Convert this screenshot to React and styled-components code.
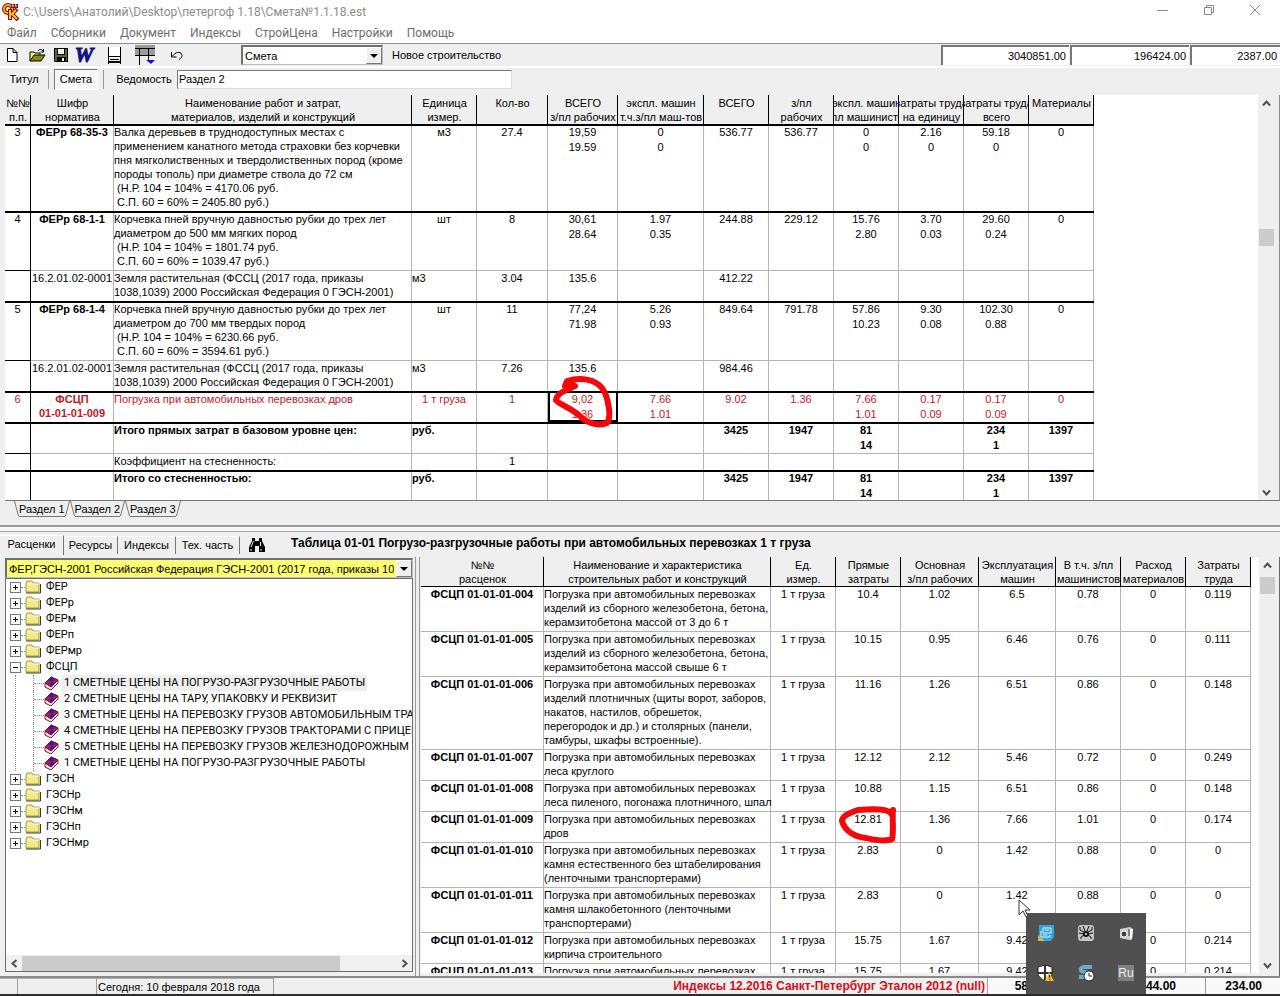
import React, { useState } from "react";
import styled, { createGlobalStyle } from "styled-components";

const estimateColumns = [
    { width: 26, lines: ["№№", "п.п."] },
    { width: 83, lines: ["Шифр", "норматива"] },
    { width: 298, lines: ["Наименование работ и затрат,", "материалов, изделий и конструкций"] },
    { width: 65, lines: ["Единица", "измер."] },
    { width: 71, lines: ["Кол-во"] },
    { width: 70, lines: ["ВСЕГО", "з/пл рабочих"] },
    { width: 86, lines: ["экспл. машин", "т.ч.з/пл маш-тов"] },
    { width: 65, lines: ["ВСЕГО"] },
    { width: 65, lines: ["з/пл", "рабочих"] },
    { width: 65, lines: ["экспл. машин", "з/пл машинистов"] },
    { width: 65, lines: ["затраты труда", "на единицу"] },
    { width: 65, lines: ["затраты труда", "всего"] },
    { width: 65, lines: ["Материалы"] },
];

const soil = "Земля растительная (ФССЦ (2017 года, приказы\n1038,1039) 2000 Российская Федерация 0 ГЭСН-2001)";

const estimateRows = [
    {
        thick: true,
        cells: ["3", "ФЕРр 68-35-3", "Валка деревьев в труднодоступных местах с\nприменением канатного метода страховки без корчевки\nпня мягколиственных и твердолиственных пород (кроме\nпороды тополь) при диаметре ствола до 72 см\n (Н.Р. 104 = 104% = 4170.06 руб.\n С.П. 60 = 60% = 2405.80 руб.)", "м3", "27.4", "19,59\n19.59", "0\n0", "536.77", "536.77", "0\n0", "2.16\n0", "59.18\n0", "0"],
    },
    {
        thick: true,
        cells: ["4", "ФЕРр 68-1-1", "Корчевка пней вручную давностью рубки до трех лет\nдиаметром до 500 мм мягких пород\n (Н.Р. 104 = 104% = 1801.74 руб.\n С.П. 60 = 60% = 1039.47 руб.)", "шт", "8", "30,61\n28.64", "1.97\n0.35", "244.88", "229.12", "15.76\n2.80", "3.70\n0.03", "29.60\n0.24", "0"],
    },
    { resource: true, cells: ["", "16.2.01.02-0001", soil, "м3", "3.04", "135.6", "", "412.22", "", "", "", "", ""] },
    {
        thick: true,
        cells: ["5", "ФЕРр 68-1-4", "Корчевка пней вручную давностью рубки до трех лет\nдиаметром до 700 мм твердых пород\n (Н.Р. 104 = 104% = 6230.66 руб.\n С.П. 60 = 60% = 3594.61 руб.)", "шт", "11", "77,24\n71.98", "5.26\n0.93", "849.64", "791.78", "57.86\n10.23", "9.30\n0.08", "102.30\n0.88", "0"],
    },
    { resource: true, cells: ["", "16.2.01.02-0001", soil, "м3", "7.26", "135.6", "", "984.46", "", "", "", "", ""] },
    {
        thick: true,
        current: true,
        cells: ["6", "ФСЦП\n01-01-01-009", "Погрузка при автомобильных перевозках дров", "1 т груза", "1", "9,02\n1.36", "7.66\n1.01", "9.02", "1.36", "7.66\n1.01", "0.17\n0.09", "0.17\n0.09", "0"],
    },
    { thick: true, total: true, cells: ["", "", "Итого прямых затрат в базовом уровне цен:", "руб.", "", "", "", "3425", "1947", "81\n14", "", "234\n1", "1397"] },
    { resource: true, cells: ["", "", "Коэффициент на стесненность:", "", "1", "", "", "", "", "", "", "", ""] },
    { thick: true, total: true, cells: ["", "", "Итого со стесненностью:", "руб.", "", "", "", "3425", "1947", "81\n14", "", "234\n1", "1397"] },
];

const priceColumns = [
    { width: 123, lines: ["№№", "расценок"] },
    { width: 227, lines: ["Наименование и характеристика", "строительных работ и конструкций"] },
    { width: 65, lines: ["Ед.", "измер."] },
    { width: 65, lines: ["Прямые", "затраты"] },
    { width: 78, lines: ["Основная", "з/пл рабочих"] },
    { width: 77, lines: ["Эксплуатация", "машин"] },
    { width: 65, lines: ["В т.ч. з/пл", "машинистов"] },
    { width: 65, lines: ["Расход", "материалов"] },
    { width: 65, lines: ["Затраты", "труда"] },
];

const load = "Погрузка при автомобильных перевозках";

const priceRows = [
    ["004", load + "\nизделий из сборного железобетона, бетона,\nкерамзитобетона массой от 3 до 6 т", "10.4", "1.02", "6.5", "0.78", "0", "0.119"],
    ["005", load + "\nизделий из сборного железобетона, бетона,\nкерамзитобетона массой свыше 6 т", "10.15", "0.95", "6.46", "0.76", "0", "0.111"],
    ["006", load + "\nизделий плотничных (щиты ворот, заборов,\nнакатов, настилов, обрешеток,\nперегородок и др.) и столярных (панели,\nтамбуры, шкафы встроенные).", "11.16", "1.26", "6.51", "0.86", "0", "0.148"],
    ["007", load + "\nлеса круглого", "12.12", "2.12", "5.46", "0.72", "0", "0.249"],
    ["008", load + "\nлеса пиленого, погонажа плотничного, шпал", "10.88", "1.15", "6.51", "0.86", "0", "0.148"],
    ["009", load + "\nдров", "12.81", "1.36", "7.66", "1.01", "0", "0.174"],
    ["010", load + "\nкамня естественного без штабелирования\n(ленточными транспортерами)", "2.83", "0", "1.42", "0.88", "0", "0"],
    ["011", load + "\nкамня шлакобетонного (ленточными\nтранспортерами)", "2.83", "0", "1.42", "0.88", "0", "0"],
    ["012", load + "\nкирпича строительного", "15.75", "1.67", "9.42", "1.16", "0", "0.214"],
    ["013", load, "15.75", "1.67", "9.42", "1.16", "0", "0.214"],
];

const tree = [
    { name: "ФЕР" },
    { name: "ФЕРр" },
    { name: "ФЕРм" },
    { name: "ФЕРп" },
    { name: "ФЕРмр" },
    {
        name: "ФСЦП",
        children: [
            "1 СМЕТНЫЕ ЦЕНЫ НА ПОГРУЗО-РАЗГРУЗОЧНЫЕ РАБОТЫ",
            "2 СМЕТНЫЕ ЦЕНЫ НА ТАРУ, УПАКОВКУ И РЕКВИЗИТ",
            "3 СМЕТНЫЕ ЦЕНЫ НА ПЕРЕВОЗКУ ГРУЗОВ АВТОМОБИЛЬНЫМ ТРАНСПОРТОМ",
            "4 СМЕТНЫЕ ЦЕНЫ НА ПЕРЕВОЗКУ ГРУЗОВ ТРАКТОРАМИ С ПРИЦЕПАМИ",
            "5 СМЕТНЫЕ ЦЕНЫ НА ПЕРЕВОЗКУ ГРУЗОВ ЖЕЛЕЗНОДОРОЖНЫМ ТРАНСПОРТОМ",
            "1 СМЕТНЫЕ ЦЕНЫ НА ПОГРУЗО-РАЗГРУЗОЧНЫЕ РАБОТЫ",
        ],
    },
    { name: "ГЭСН" },
    { name: "ГЭСНр" },
    { name: "ГЭСНм" },
    { name: "ГЭСНп" },
    { name: "ГЭСНмр" },
];

const AppLogo = () => (
    <svg width="18" height="18" viewBox="0 0 18 18">
        <circle cx="6" cy="6" r="4" fill="none" stroke="#8a1010" strokeWidth="4" />
        <circle cx="6" cy="6" r="4" fill="none" stroke="#f5a61c" strokeWidth="2" />
        <path d="M9 1h7v4H9z" fill="#6d1a1a" />
        <path d="M10 2h1v2M13 2h1v2" stroke="#fff" strokeWidth="1" fill="none" />
        <path d="M8 6v11M15 6l-5 5 6 6" stroke="#8a1010" strokeWidth="4" fill="none" />
        <path d="M8 7v9M14 7l-4 4 5 5" stroke="#ffc02e" strokeWidth="2" fill="none" />
    </svg>
);

const NewIcon = () => (
    <svg width="12" height="14" viewBox="0 0 12 14">
        <path d="M1.500 .5h5.500l4 4v9H1.500z M7 .5v4h4" fill="#fff" stroke="#000" />
    </svg>
);

const OpenIcon = () => (
    <svg width="17" height="14" viewBox="0 0 17 14">
        <path d="M1 13V4h4l1 1h5v3" fill="#f4f08a" stroke="#000" />
        <path d="M1 13l4-6h11l-4 6z" fill="#8a8a1c" stroke="#000" />
        <path d="M9 3c1-2 4-2 5 0M14.500 1v3h-3" fill="none" stroke="#000" />
    </svg>
);

const SaveIcon = () => (
    <svg width="14" height="14" viewBox="0 0 14 14">
        <path d="M0 0h14v14H1l-1-1z" fill="#000" />
        <path d="M1 1h2v6h8V1h2v12h-1V9H3v4H1z" fill="#5d6b25" />
        <path d="M4 1h6v5H4z" fill="#f2f2f2" />
        <path d="M8 10h2v3H8z" fill="#fff" />
    </svg>
);

const LevelIcon = () => (
    <svg width="15" height="17" viewBox="0 0 15 17">
        <path d="M2 0h11v11H2z" fill="#fff" />
        <path d="M1.500 0v17M13.500 0v17" stroke="#000" />
        <path d="M1 9.500h13" stroke="#000" />
        <path d="M3 12.500h9" stroke="#000" />
        <path d="M1 15h13" stroke="#000" strokeWidth="2" />
    </svg>
);

const TableIcon = () => (
    <svg width="20" height="20" viewBox="0 0 20 20">
        <path d="M0 0h20v10H0z" fill="#9b9b9b" />
        <path d="M0 3.500h20M0 10.500h20M4.500 3v17M13.500 3v12" stroke="#000" />
        <path d="M11 15h9l-4 4z" fill="#1717c9" />
    </svg>
);

const UndoIcon = () => (
    <svg width="13" height="10" viewBox="0 0 13 10">
        <path d="M1.500 2v5h5M2 6.500l2-2c2-3 8-3 8 1 0 2-1 3-3 4" fill="none" stroke="#000" strokeWidth="1" />
    </svg>
);

const BinocularsIcon = () => (
    <svg width="16" height="14" viewBox="0 0 16 14">
        <path d="M3 0h3v3h4V0h3v3l3 6v5h-6V8H6v6H0V9l3-6z" fill="#000" />
        <path d="M4.500 3L2 9M11.500 4v4M2 11v2M12 11v2" stroke="#eee" />
    </svg>
);

const FolderIcon = () => (
    <svg width="16" height="14" viewBox="0 0 16 14">
        <path d="M1 3l1-2h5l1 2h6v9H1z" fill="#f0ea8e" stroke="#a39a3a" />
        <path d="M2 4h12" stroke="#fffbd0" />
        <path d="M1 13h14.500V4" fill="none" stroke="#3c3a12" />
    </svg>
);

const BookIcon = () => (
    <svg width="15" height="14" viewBox="0 0 15 14">
        <path d="M1 7l6-6 7 3v3l-7 7-6-3z" fill="#f4f0f4" stroke="#7a1428" />
        <path d="M1 7l6-6 7 3-7 7z" fill="#cf1228" stroke="#7a1428" />
        <path d="M4 4l3-3 4 2-3 3z" fill="#2020c8" />
        <path d="M5 8l3-2 3 1-4 3z" fill="#2020c8" />
        <path d="M2 9l5 3 6-6" fill="none" stroke="#c9c9dc" />
    </svg>
);

const Chevron = ({ turn }) => (
    <svg width="9" height="9" viewBox="0 0 9 9" style={{ transform: `rotate(${turn}deg)` }}>
        <path d="M1 6.500l3.500-4 3.500 4" fill="none" stroke="#505050" strokeWidth="2" />
    </svg>
);

const Grid = ({ columns, label, children }) => (
    <Sheet aria-label={label}>
        <colgroup>
            {columns.map((column, i) => <Column key={i} $width={column.width} />)}
        </colgroup>
        <thead>
            <tr>
                {columns.map((column, i) => (
                    <HeadCell key={i}>
                        <HeadText>
                            {column.lines.map((line) => <span key={line}>{line}</span>)}
                        </HeadText>
                    </HeadCell>
                ))}
            </tr>
        </thead>
        <tbody>{children}</tbody>
    </Sheet>
);

const VerticalScroll = ({ before, after }) => (
    <ScrollBar>
        <ScrollButton aria-label="Вверх"><Chevron turn={0} /></ScrollButton>
        <Space $grow={before} />
        <Thumb />
        <Space $grow={after} />
        <ScrollButton aria-label="Вниз"><Chevron turn={180} /></ScrollButton>
    </ScrollBar>
);

const App = () => {
    const [document, setDocument] = useState("Смета");
    const [section, setSection] = useState("Раздел 2");
    const [opened, setOpened] = useState(["ФСЦП"]);

    const toggle = (name) => {
        setOpened(opened.includes(name) ? opened.filter((item) => item !== name) : [...opened, name]);
    };

    return (
        <Window>
            <GlobalStyle />
            <Upper>
                <TitleBar>
                    <AppLogo />
                    <Title>C:\Users\Анатолий\Desktop\петергоф 1.18\Смета№1.1.18.est</Title>
                    <WindowButton aria-label="Свернуть">
                        <svg width="12" height="12"><path d="M0 6.500h11" stroke="#888" /></svg>
                    </WindowButton>
                    <WindowButton aria-label="Восстановить">
                        <svg width="12" height="12"><path d="M1.500 3.500h7v7h-7zM3.500 3V1.500h7v7H9" fill="none" stroke="#888" /></svg>
                    </WindowButton>
                    <WindowButton aria-label="Закрыть">
                        <svg width="12" height="12"><path d="M1 1l10 10M11 1L1 11" stroke="#888" /></svg>
                    </WindowButton>
                </TitleBar>

                <Menu>
                    {["Файл", "Сборники", "Документ", "Индексы", "СтройЦена", "Настройки", "Помощь"].map((item) => (
                        <MenuItem key={item}>{item}</MenuItem>
                    ))}
                </Menu>

                <ToolBar>
                    <Tools>
                        <ToolButton $width={24} aria-label="Создать"><NewIcon /></ToolButton>
                        <ToolButton $width={26} aria-label="Открыть"><OpenIcon /></ToolButton>
                        <ToolButton $width={22} aria-label="Сохранить"><SaveIcon /></ToolButton>
                        <WordButton $width={24}>W</WordButton>
                        <ToolButton $width={36} aria-label="Уровень"><LevelIcon /></ToolButton>
                        <ToolButton $width={26} aria-label="Таблица"><TableIcon /></ToolButton>
                        <ToolButton $width={36} aria-label="Отменить"><UndoIcon /></ToolButton>
                    </Tools>
                    <Combo $width={142}>
                        <ComboSelect aria-label="Документ" value={document} onChange={(e) => setDocument(e.target.value)}>
                            <option>Смета</option>
                            <option>Ведомость</option>
                        </ComboSelect>
                        <ComboArrow />
                    </Combo>
                    <BuildKind>Новое строительство</BuildKind>
                    <TotalInput $width={128} aria-label="Всего" readOnly value="3040851.00" />
                    <TotalInput $width={119} aria-label="Зарплата" readOnly value="196424.00" />
                    <TotalInput $width={90} aria-label="Трудозатраты" readOnly value="2387.00" />
                </ToolBar>

                <ViewBar>
                    <ViewButton $width={48}>Титул</ViewButton>
                    <Divider />
                    <ViewButton $width={44} $pressed>Смета</ViewButton>
                    <Divider />
                    <ViewButton $width={70}>Ведомость</ViewButton>
                    <SectionInput aria-label="Раздел" value={section} onChange={(e) => setSection(e.target.value)} />
                </ViewBar>

                <SheetArea>
                    <SheetView>
                        <Grid columns={estimateColumns} label="Смета">
                            {estimateRows.map((row, i) => (
                                <Row key={i} $current={row.current} $total={row.total}>
                                    {row.cells.map((cell, j) => (
                                        <Cell
                                            key={j}
                                            $thick={row.thick}
                                            $black={j === 0}
                                            $number={j > 4}
                                            $left={j === 2 || (j === 3 && (row.resource || row.total))}
                                            $bold={j === 1 && !row.resource}
                                            $selected={row.current && j === 5}
                                        >
                                            {cell}
                                            {row.current && j === 5 && (
                                                <Marker $left={2} $top={-17} width="66" height="54" viewBox="550 375 66 54">
                                                    <path d="M565 387L567 382C580 378 595 380 602 389C608 397 612 418 607 424C600 427 589 425 582 419C574 410 558 405 556 401C557 394 566 391 575 387L568 384" />
                                                </Marker>
                                            )}
                                        </Cell>
                                    ))}
                                </Row>
                            ))}
                        </Grid>
                    </SheetView>
                    <VerticalScroll before={118} after={237} />
                </SheetArea>

                <SectionTabs>
                    {["Раздел 1", "Раздел 2", "Раздел 3"].map((name) => (
                        <SectionTab key={name} $active={name === section} onClick={() => setSection(name)}>{name}</SectionTab>
                    ))}
                </SectionTabs>
            </Upper>

            <Splitter />

            <Lower>
                <BookBar>
                    <BookTab $width={64} $active>Расценки</BookTab>
                    <BookTab $width={54}>Ресурсы</BookTab>
                    <BookTab $width={58}>Индексы</BookTab>
                    <BookTab $width={64}>Тех. часть</BookTab>
                    <FindButton aria-label="Найти"><BinocularsIcon /></FindButton>
                    <TableTitle>Таблица 01-01 Погрузо-разгрузочные работы при автомобильных перевозках 1 т груза</TableTitle>
                </BookBar>

                <Panes>
                    <TreePane>
                        <Combo>
                            <ComboSelect $yellow aria-label="Сборник">
                                <option>ФЕР,ГЭСН-2001 Российская Федерация ГЭСН-2001 (2017 года, приказы 1038,1039)</option>
                            </ComboSelect>
                            <ComboArrow />
                        </Combo>
                        <TreeBox>
                            <TreeList>
                                {tree.map((node) => (
                                    <li key={node.name}>
                                        <TreeRow>
                                            <Toggle aria-label={node.name} onClick={() => toggle(node.name)}>
                                                <svg width="9" height="9">
                                                    <path d="M2 4.500h5" stroke="#000" />
                                                    {!opened.includes(node.name) && <path d="M4.500 2v5" stroke="#000" />}
                                                </svg>
                                            </Toggle>
                                            <Dots $width={4} />
                                            <FolderIcon />
                                            <NodeName>{node.name}</NodeName>
                                        </TreeRow>
                                        {node.children && opened.includes(node.name) && (
                                            <Branch>
                                                {node.children.map((child, i) => (
                                                    <TreeRow as="li" key={i}>
                                                        <Dots $width={10} />
                                                        <BookIcon />
                                                        <NodeName $selected={i === 0}>{child}</NodeName>
                                                    </TreeRow>
                                                ))}
                                            </Branch>
                                        )}
                                    </li>
                                ))}
                            </TreeList>
                            <BottomScroll>
                                <ScrollButton aria-label="Влево"><Chevron turn={-90} /></ScrollButton>
                                <WideThumb />
                                <Space $grow={56} />
                                <ScrollButton aria-label="Вправо"><Chevron turn={90} /></ScrollButton>
                            </BottomScroll>
                        </TreeBox>
                    </TreePane>

                    <PricePane>
                        <SheetView>
                            <Grid columns={priceColumns} label="Расценки">
                                {priceRows.map(([code, name, ...numbers]) => (
                                    <Row key={code}>
                                        <PriceCell $bold>ФСЦП 01-01-01-{code}</PriceCell>
                                        <PriceCell $left>{name}</PriceCell>
                                        <PriceCell>1 т груза</PriceCell>
                                        {numbers.map((number, j) => (
                                            <PriceCell key={j}>
                                                {number}
                                                {code === "009" && j === 0 && (
                                                    <Marker $left={1} $top={-9} width="62" height="44" viewBox="836 801 62 44">
                                                        <path d="M891 814C889 807 870 808 857 809C848 812 841 815 841 820C844 831 855 836 865 837C875 840 887 840 891 838C893 829 891 819 892 809" />
                                                    </Marker>
                                                )}
                                            </PriceCell>
                                        ))}
                                    </Row>
                                ))}
                            </Grid>
                        </SheetView>
                        <VerticalScroll before={4} after={360} />
                    </PricePane>
                </Panes>

                <StatusBar>
                    <StatusCell $width={18} />
                    <StatusCell $width={79} />
                    <StatusCell $width={177}>Сегодня: 10 февраля 2018 года</StatusCell>
                    <IndexInfo>Индексы 12.2016 Санкт-Петербург Эталон 2012 (null)</IndexInfo>
                    <StatusTotal $width={62} $gap={22}>58</StatusTotal>
                    <StatusTotal $width={155} $gap={29}>44.00</StatusTotal>
                    <StatusTotal $width={75} $gap={18}>234.00</StatusTotal>
                </StatusBar>
            </Lower>

            <Tray>
                <svg width="18" height="18" viewBox="0 0 18 18">
                    <path d="M2 1h15v12l-3 4H2z" fill="#36a3dd" />
                    <path d="M1 11v6h7z" fill="#d3b35c" />
                    <path d="M6 4h8v5H6zM4 7v6h9v-2M8 6h4M6 11h4" fill="none" stroke="#d8f2ff" />
                </svg>
                <svg width="18" height="18" viewBox="0 0 18 18">
                    <rect x="1" y="1" width="16" height="16" rx="3" fill="#c4c4c4" />
                    <circle cx="9" cy="10" r="3" fill="#111" />
                    <path d="M3 3v3l4 2M15 3v3l-4 2M2 9l5 1M16 9l-5 1M4 15v-2l3-2M14 15v-2l-3-2M6 2l2 5M12 2l-2 5" stroke="#111" fill="none" />
                    <circle cx="9" cy="10" r="1" fill="#fff" />
                </svg>
                <svg width="18" height="18" viewBox="0 0 18 18">
                    <path d="M3 5l10-2 3 2-1 10-3 1-9-2z" fill="#cfcfcf" />
                    <path d="M13 5l3 0-1 10-2 1z" fill="#fafafa" />
                    <path d="M12 5v7" stroke="#333" />
                    <circle cx="7" cy="10" r="3" fill="#38404a" stroke="#fff" />
                </svg>
                <svg width="18" height="18" viewBox="0 0 18 18">
                    <path d="M8 1l7 2v6c0 4-4 6-7 8-3-2-7-4-7-8V3z" fill="#fff" stroke="#222" />
                    <path d="M8 1v16M1 9h14" stroke="#333" strokeWidth="2" />
                    <path d="M12 8l5 9H8z" fill="#f5b82e" />
                    <path d="M12.500 11v3M12.500 15v1" stroke="#222" />
                </svg>
                <svg width="18" height="18" viewBox="0 0 18 18">
                    <path d="M15 3H7C2 4 3 8 8 8c6 1 4 5-1 5H2" fill="none" stroke="#6ea8cf" strokeWidth="4" />
                    <circle cx="12" cy="12" r="5" fill="#fff" stroke="#222" />
                    <path d="M12 9v3h3" fill="none" stroke="#222" />
                </svg>
                <Language>Ru</Language>
            </Tray>
            <Pointer width="14" height="20" viewBox="0 0 14 20">
                <path d="M1 1v15l4-4 3 6 2-1-3-6h5z" fill="#fff" stroke="#333" />
            </Pointer>
        </Window>
    );
};

const GlobalStyle = createGlobalStyle`
    * {
        box-sizing: border-box;
    }

    body {
        margin: 0;
        background: #efefef;
        color: #000;
        font-family: 'Liberation Sans', Arial, sans-serif;
        font-size: 11px;
        line-height: 14px;
    }

    button, input, select {
        font: inherit;
        color: inherit;
        margin: 0;
        padding: 0;
        border: none;
        background: none;
        border-radius: 0;
        outline: none;
        white-space: nowrap;
    }

    svg {
        display: block;
        flex: none;
    }
`;

const Window = styled.div`
    position: relative;
    display: flex;
    flex-direction: column;
    height: 100vh;
    overflow: hidden;
    background: #efefef;
`;

const Upper = styled.div`
    display: flex;
    flex-direction: column;
    flex: 525 1 0;
    min-height: 0;
`;

const Lower = styled.div`
    display: flex;
    flex-direction: column;
    flex: 464 1 0;
    min-height: 0;
`;

const TitleBar = styled.header`
    display: flex;
    align-items: center;
    height: 23px;
    flex: none;
    padding: 0 2px;
    background: #fff;
`;

const Title = styled.span`
    flex: 1;
    padding-left: 3px;
    font-family: Roboto, sans-serif;
    font-size: 12px;
    color: #8c8c8c;
`;

const WindowButton = styled.button`
    display: flex;
    justify-content: center;
    align-items: center;
    align-self: flex-start;
    width: 46px;
    height: 20px;
`;

const Menu = styled.nav`
    display: flex;
    gap: 14px;
    height: 20px;
    flex: none;
    padding-left: 7px;
    background: #fff;
`;

const MenuItem = styled.button`
    height: 20px;
    font-family: Roboto, sans-serif;
    font-size: 12px;
    color: #6d6d6d;
`;

const ToolBar = styled.div`
    display: flex;
    align-items: center;
    height: 25px;
    flex: none;
    border-top: 1px solid #8e8e8e;
    border-bottom: 2px solid #fff;
`;

const Tools = styled.div`
    display: flex;
    align-items: center;
    width: 241px;
    height: 22px;
`;

const ToolButton = styled.button`
    display: flex;
    justify-content: center;
    align-items: center;
    width: ${(props) => props.$width}px;
    height: 22px;
`;

const WordButton = styled(ToolButton)`
    font-family: 'Liberation Serif', serif;
    font-size: 21px;
    font-weight: bold;
    font-style: italic;
    color: #14147c;
    -webkit-text-stroke: 1px #14147c;
`;

const Combo = styled.div`
    position: relative;
    width: ${(props) => (props.$width ? props.$width + "px" : "auto")};
    height: 20px;
    flex: none;
`;

const ComboSelect = styled.select`
    appearance: none;
    width: 100%;
    height: 20px;
    padding: 0 18px 0 2px;
    border: 1px solid #bdbdbd;
    border-top: 2px solid #707070;
    border-left: 2px solid #707070;
    background: ${(props) => (props.$yellow ? "#ffff74" : "#fff")};
    overflow: hidden;
`;

const ComboArrow = styled.span`
    position: absolute;
    right: 1px;
    top: 2px;
    width: 16px;
    height: 17px;
    border: 1px solid #fff;
    border-right-color: #777;
    border-bottom-color: #777;
    background: #efefef;
    pointer-events: none;

    &::after {
        content: "";
        position: absolute;
        left: 3px;
        top: 6px;
        border: 4px solid transparent;
        border-top-color: #000;
        border-bottom: none;
    }
`;

const BuildKind = styled.span`
    flex: 1;
    padding-left: 9px;
`;

const TotalInput = styled.input`
    width: ${(props) => props.$width}px;
    height: 20px;
    margin-left: 1px;
    padding-right: 3px;
    border-top: 2px solid #767676;
    border-left: 2px solid #767676;
    background: #fff;
    text-align: right;
`;

const ViewBar = styled.div`
    display: flex;
    align-items: center;
    gap: 5px;
    height: 27px;
    flex: none;
    padding-bottom: 5px;
`;

const ViewButton = styled.button`
    width: ${(props) => props.$width}px;
    height: 21px;
    border: 1px solid ${(props) => (props.$pressed ? "#fff" : "transparent")};
    border-top-color: ${(props) => (props.$pressed ? "#777" : "transparent")};
    border-left-color: ${(props) => (props.$pressed ? "#777" : "transparent")};
    background: ${(props) => (props.$pressed ? "#f7f7f7" : "none")};

    &:first-child {
        margin-right: -5px;
    }
`;

const Divider = styled.span`
    width: 1px;
    height: 19px;
    background: #999;
`;

const SectionInput = styled.input`
    width: 335px;
    height: 19px;
    margin-left: -7px;
    padding: 0 1px;
    border: 1px solid #dcdcdc;
    border-top: 1px solid #777;
    border-left: 1px solid #777;
    background: #fff;
`;

const SheetArea = styled.div`
    display: flex;
    flex: 1;
    min-height: 0;
    margin-left: 5px;
    padding-right: 5px;
    border-right: 1px solid #8a8a8a;
`;

const SheetView = styled.div`
    flex: 1;
    min-width: 0;
    overflow: hidden;
    background: #fff;
`;

const Sheet = styled.table`
    table-layout: fixed;
    width: 1px;
    border-collapse: separate;
    border-spacing: 0;
`;

const Column = styled.col`
    width: ${(props) => props.$width}px;
`;

const HeadCell = styled.th`
    height: 29px;
    padding: 1px 0 0;
    overflow: hidden;
    vertical-align: top;
    font-weight: normal;
    background: #efefef;
    box-shadow: inset -1px 0 0 #000;
`;

const HeadText = styled.div`
    display: flex;
    flex-direction: column;
    align-items: center;
    height: 28px;
    white-space: nowrap;
`;

const Row = styled.tr`
    color: ${(props) => (props.$current ? "#c4161c" : "#000")};
    font-weight: ${(props) => (props.$total ? "bold" : "normal")};
`;

// Lines are inset shadows so that they take no room from the text
const Cell = styled.td`
    position: relative;
    padding: 1px ${(props) => (props.$left ? 0 : 1)}px ${(props) => (props.$number ? 0 : 2)}px 0;
    line-height: ${(props) => (props.$number ? 15 : 14)}px;
    vertical-align: top;
    white-space: pre;
    text-align: ${(props) => (props.$left ? "left" : "center")};
    font-weight: ${(props) => (props.$bold ? "bold" : "inherit")};
    box-shadow:
        ${(props) => (props.$selected ? "inset 0 0 0 2px #000," : "")}
        inset 0 ${(props) => (props.$thick ? "2px" : "1px")} 0 ${(props) => (props.$thick || props.$black ? "#000" : "#b4b4b4")},
        inset -1px 0 0 ${(props) => (props.$black ? "#000" : "#b4b4b4")};
`;

const PriceCell = styled(Cell)`
    tr:first-child > & {
        box-shadow: inset 0 1px 0 #000, inset -1px 0 0 #b4b4b4;
    }
`;

const Marker = styled.svg`
    position: absolute;
    z-index: 1;
    left: ${(props) => props.$left}px;
    top: ${(props) => props.$top}px;
    fill: none;
    stroke: #f5070c;
    stroke-width: 6;
    stroke-linecap: round;
    stroke-linejoin: round;
    pointer-events: none;
`;

const ScrollBar = styled.div`
    display: flex;
    flex-direction: column;
    align-items: center;
    width: 16px;
    flex: none;
    background: #efefef;
`;

const ScrollButton = styled.button`
    display: flex;
    justify-content: center;
    align-items: center;
    width: 16px;
    height: 16px;
    flex: none;
`;

const Space = styled.span`
    flex: ${(props) => props.$grow} 1 0;
`;

const Thumb = styled.span`
    width: 15px;
    height: 17px;
    background: #cbcbcb;
`;

const WideThumb = styled.span`
    flex: 317 1 0;
    height: 15px;
    background: #cbcbcb;
`;

const SectionTabs = styled.div`
    display: flex;
    gap: 10px;
    height: 25px;
    flex: none;
    margin-left: 5px;
    padding-left: 14px;
    border-top: 1px solid #777;
`;

const SectionTab = styled.button`
    position: relative;
    height: 16px;
    border-bottom: 1px solid #777;

    &::before, &::after {
        content: "";
        position: absolute;
        top: 0;
        height: 15px;
        width: 1px;
        background: #777;
    }

    &::before {
        left: -3px;
        transform: skewX(15deg);
    }

    &::after {
        right: -3px;
        transform: skewX(-15deg);
    }
`;

const Splitter = styled.div`
    height: 7px;
    flex: none;
    border-top: 2px solid #9a9a9a;
    border-bottom: 1px solid #a8a8a8;
    background: #f7f7f7;
`;

const BookBar = styled.div`
    display: flex;
    align-items: center;
    height: 25px;
    flex: none;
`;

const BookTab = styled.button`
    width: ${(props) => props.$width}px;
    height: ${(props) => (props.$active ? 20 : 18)}px;
    padding-bottom: ${(props) => (props.$active ? 2 : 0)}px;
    border-right: 1px solid #777;
    border-top: 1px solid #fff;
`;

const FindButton = styled.button`
    display: flex;
    justify-content: center;
    width: 34px;
`;

const TableTitle = styled.h1`
    margin: 0;
    padding-left: 17px;
    padding-bottom: 3px;
    font-size: 12px;
    font-weight: bold;
    white-space: nowrap;
`;

const Panes = styled.div`
    display: flex;
    flex: 1;
    min-height: 0;
`;

const TreePane = styled.div`
    display: flex;
    flex-direction: column;
    width: 416px;
    flex: none;
    padding: 1px 2px 4px 5px;
    border-right: 1px solid #9a9a9a;
`;

const TreeBox = styled.div`
    display: flex;
    flex-direction: column;
    flex: 1;
    min-height: 0;
    border: 1px solid #6c6c6c;
    background: #fff;
`;

const TreeList = styled.ul`
    flex: 1;
    margin: 0;
    padding: 0 0 0 4px;
    list-style: none;
    overflow: hidden;
    white-space: nowrap;
`;

const TreeRow = styled.div`
    display: flex;
    align-items: center;
    height: 16px;
`;

const Toggle = styled.button`
    width: 11px;
    height: 11px;
    flex: none;
    border: 1px solid #777;
    background: #fff;
`;

const Dots = styled.span`
    width: ${(props) => props.$width}px;
    flex: none;
    border-top: 1px dotted #888;
`;

const NodeName = styled.span`
    margin-left: 3px;
    padding: 1px 2px;
    font-family: Roboto, sans-serif;
    background: ${(props) => (props.$selected ? "#efefef" : "none")};
`;

const Branch = styled.ul`
    margin: 0 0 0 5px;
    padding: 0 0 0 17px;
    list-style: none;
    border-left: 1px dotted #888;

    li {
        border-left: 1px dotted #888;
    }
`;

const BottomScroll = styled.div`
    display: flex;
    align-items: center;
    height: 16px;
    flex: none;
    background: #f0f0f0;
`;

const PricePane = styled.div`
    display: flex;
    flex: 1;
    min-width: 0;
    margin-left: 3px;
    padding: 0 4px 3px 1px;
    border-left: 1px solid #9a9a9a;
    border-right: 1px solid #6a6a6a;
`;

const StatusBar = styled.footer`
    display: flex;
    height: 20px;
    flex: none;
    border-top: 2px solid #8a8a8a;
    border-bottom: 2px solid #2c2c2c;
    line-height: 16px;
`;

const StatusCell = styled.span`
    width: ${(props) => props.$width}px;
    padding-left: 1px;
    border-top: 1px solid #b0b0b0;
    border-right: 1px solid #a0a0a0;
`;

const IndexInfo = styled.strong`
    flex: 1;
    padding-right: 2px;
    border-right: 1px solid #a0a0a0;
    text-align: right;
    font-size: 12px;
    color: #d01018;
`;

const StatusTotal = styled.strong`
    width: ${(props) => props.$width}px;
    padding-right: ${(props) => props.$gap}px;
    background: #f8f8f8;
    text-align: right;
    font-size: 12px;

    &:last-child {
        border-left: 1px solid #999;
    }
`;

const Tray = styled.div`
    position: absolute;
    z-index: 2;
    right: 134px;
    bottom: 2px;
    display: grid;
    grid-template-columns: repeat(3, 40px);
    grid-template-rows: repeat(2, 40px);
    place-items: center;
    width: 120px;
    height: 81px;
    background: #505050;
`;

const Language = styled.span`
    width: 16px;
    height: 16px;
    background: #808080;
    color: #eee;
    font-size: 12px;
    line-height: 16px;
    text-align: center;
`;

const Pointer = styled.svg`
    position: absolute;
    z-index: 3;
    right: 248px;
    bottom: 77px;
`;

export default App;
